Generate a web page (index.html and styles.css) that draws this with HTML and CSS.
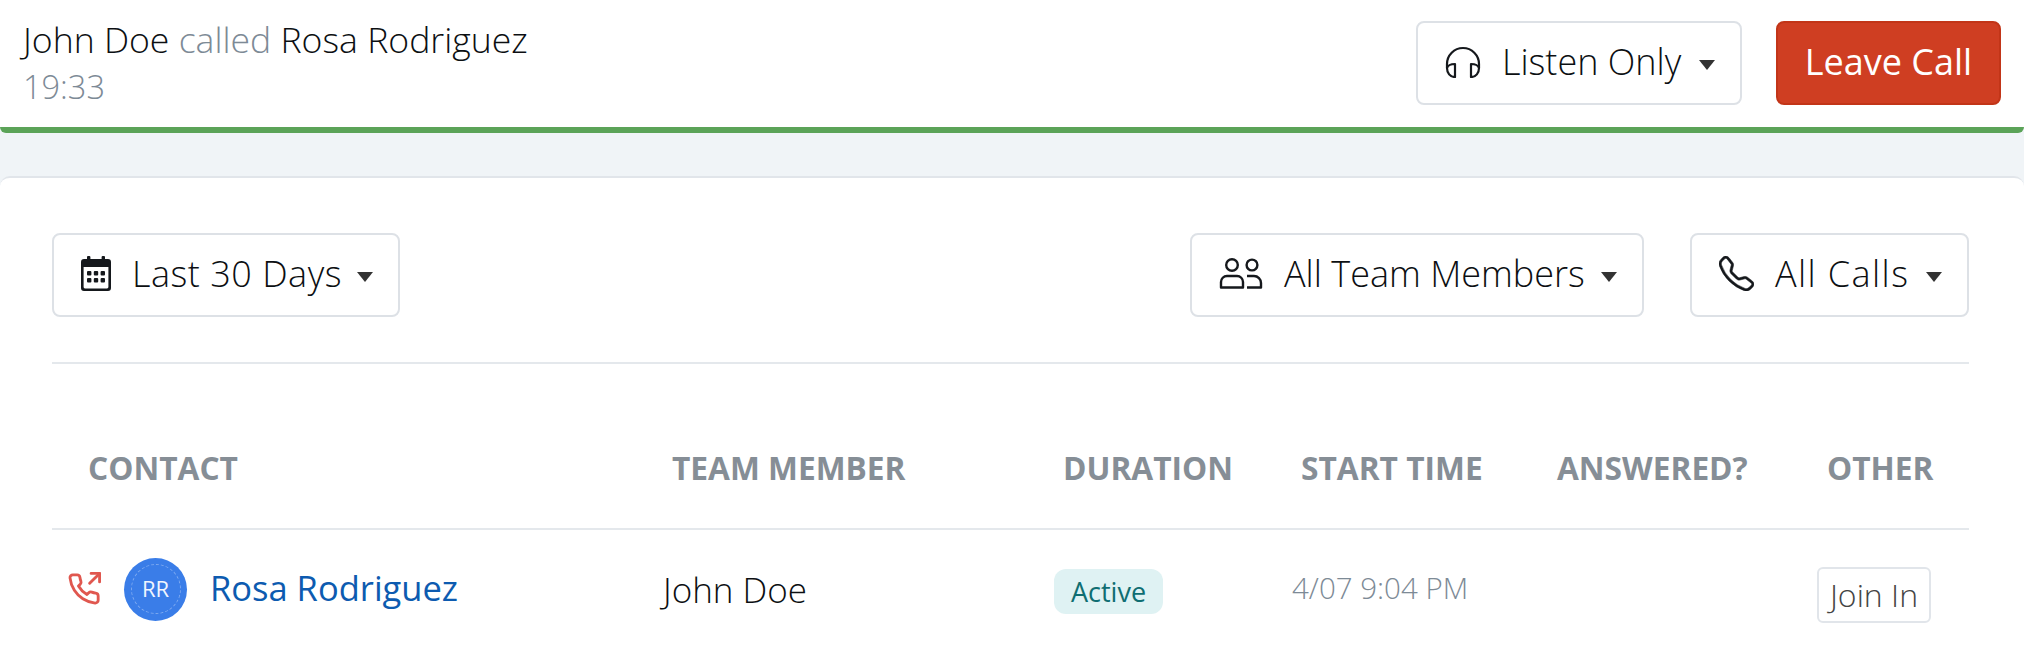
FILE: index.html
```html
<!DOCTYPE html>
<html lang="en">
<head>
	<meta charset="UTF-8">
	<title>Calls</title>
	<link rel="stylesheet" href="styles.css">
</head>
<body>
	<div class="app">
		<div class="callbar">
			<div class="callinfo">
				<div class="callnames">John Doe <span class="muted">called</span> Rosa Rodriguez</div>
				<div class="calltime">19:33</div>
			</div>
			<button class="btn listen">
				<svg class="icon" width="36" height="32" viewBox="0 0 36 32" fill="none" stroke="#15181c" stroke-width="2.2" stroke-linejoin="round">
					<path d="M2 22V18A16 16 0 0 1 34 18V22"/>
					<path d="M2 22C2 27 5 31 10 31V18C6 18 3 19 2 22Z"/>
					<path d="M34 22C34 27 31 31 26 31V18C30 18 33 19 34 22Z"/>
				</svg>
				<span class="label">Listen Only</span><span class="caret"></span>
			</button>
			<button class="btn leave"><span class="leavetext">Leave Call</span></button>
		</div>

		<div class="card">
			<div class="filters">
				<button class="btn range">
					<svg class="icon" width="30" height="35" viewBox="0 0 30 35" fill="#15181c">
						<rect x="6" y="0" width="3.4" height="7" rx="1"/>
						<rect x="20.6" y="0" width="3.4" height="7" rx="1"/>
						<path d="M3 3H27A3 3 0 0 1 30 6V32A3 3 0 0 1 27 35H3A3 3 0 0 1 0 32V6A3 3 0 0 1 3 3ZM2.6 11V31A1.4 1.4 0 0 0 4 32.4H26A1.4 1.4 0 0 0 27.4 31V11Z" fill-rule="evenodd"/>
						<rect x="6" y="15" width="4.4" height="4.4" rx="1"/>
						<rect x="12.8" y="15" width="4.4" height="4.4" rx="1"/>
						<rect x="19.6" y="15" width="4.4" height="4.4" rx="1"/>
						<rect x="6" y="22" width="4.4" height="4.4" rx="1"/>
						<rect x="12.8" y="22" width="4.4" height="4.4" rx="1"/>
						<rect x="19.6" y="22" width="4.4" height="4.4" rx="1"/>
					</svg>
					<span class="label">Last 30 Days</span><span class="caret"></span>
				</button>
				<div class="spacer"></div>
				<button class="btn members">
					<svg class="icon" width="44" height="31" viewBox="0 0 44 31" fill="none" stroke="#15181c" stroke-width="2.4" stroke-linejoin="round">
						<circle cx="13" cy="7" r="5.8"/>
						<path d="M8 18H18A6 6 0 0 1 24 24V29.5H2V24A6 6 0 0 1 8 18Z"/>
						<circle cx="33" cy="7" r="5.4"/>
						<path d="M28 18H35A7 7 0 0 1 42 25V29.5H28"/>
					</svg>
					<span class="label">All Team Members</span><span class="caret"></span>
				</button>
				<button class="btn kinds">
					<svg class="icon" width="35" height="35" viewBox="0 0 16 16" fill="#15181c" stroke="#15181c" stroke-width="0.25">
						<path d="M3.654 1.328a.678.678 0 0 0-1.015-.063L1.605 2.3c-.483.484-.661 1.169-.45 1.77a17.568 17.568 0 0 0 4.168 6.608 17.569 17.569 0 0 0 6.608 4.168c.601.211 1.286.033 1.77-.45l1.034-1.034a.678.678 0 0 0-.063-1.015l-2.307-1.794a.678.678 0 0 0-.58-.122l-2.19.547a1.745 1.745 0 0 1-1.657-.459L5.482 8.062a1.745 1.745 0 0 1-.46-1.657l.548-2.19a.678.678 0 0 0-.122-.58L3.654 1.328zM1.884.511a1.745 1.745 0 0 1 2.612.163L6.29 2.98c.329.423.445.974.315 1.494l-.547 2.19a.678.678 0 0 0 .178.643l2.457 2.457a.678.678 0 0 0 .644.178l2.189-.547a1.745 1.745 0 0 1 1.494.315l2.306 1.794c.829.645.905 1.87.163 2.611l-1.034 1.034c-.74.74-1.846 1.065-2.877.702a18.634 18.634 0 0 1-7.01-4.42 18.634 18.634 0 0 1-4.42-7.009c-.362-1.03-.037-2.137.703-2.877L1.885.511z"/>
					</svg>
					<span class="label">All Calls</span><span class="caret"></span>
				</button>
			</div>

			<table class="calls">
				<colgroup>
					<col class="c-contact">
					<col class="c-member">
					<col class="c-duration">
					<col class="c-start">
					<col class="c-answered">
					<col class="c-other">
				</colgroup>
				<thead>
					<tr>
						<th>CONTACT</th>
						<th>TEAM MEMBER</th>
						<th>DURATION</th>
						<th>START TIME</th>
						<th>ANSWERED?</th>
						<th>OTHER</th>
					</tr>
				</thead>
				<tbody>
					<tr>
						<td class="contact">
							<div class="contactrow">
								<svg class="outgoing" width="34" height="34" viewBox="0 0 24 24" fill="none" stroke="#e0574f" stroke-width="2" stroke-linecap="round" stroke-linejoin="round">
									<polyline points="23 7 23 1 17 1"/>
									<line x1="16" y1="8" x2="23" y2="1"/>
									<path d="M22 16.92v3a2 2 0 0 1-2.18 2 19.79 19.79 0 0 1-8.63-3.07 19.5 19.5 0 0 1-6-6 19.79 19.79 0 0 1-3.07-8.67A2 2 0 0 1 4.11 2h3a2 2 0 0 1 2 1.72 12.84 12.84 0 0 0 .7 2.81 2 2 0 0 1-.45 2.11L8.09 9.91a16 16 0 0 0 6 6l1.27-1.27a2 2 0 0 1 2.11-.45 12.84 12.84 0 0 0 2.81.7A2 2 0 0 1 22 16.92z"/>
								</svg>
								<div class="avatar"><span class="avatarring">RR</span></div>
								<a class="contactname" href="#">Rosa Rodriguez</a>
							</div>
						</td>
						<td>John Doe</td>
						<td><span class="badge">Active</span></td>
						<td class="started">4/07 9:04 PM</td>
						<td></td>
						<td><button class="joinbtn">Join In</button></td>
					</tr>
				</tbody>
			</table>
		</div>
	</div>
</body>
</html>
```

FILE: styles.css
```css
* {
	box-sizing: border-box;
}

body {
	margin: 0;
	background: #fff;
	font-family: "Open Sans", "Lato", sans-serif;
	font-weight: 300;
	color: #0c0f12;
	overflow: hidden;
}

.app {
	width: 2024px;
	height: 650px;
	background: #f0f4f7;
	overflow: hidden;
}

.callbar {
	display: flex;
	align-items: flex-start;
	height: 133px;
	padding: 20px 23px 0 23px;
	background: #fff;
	border-bottom: 6px solid #5ba358;
	border-radius: 0 0 6px 6px;
}

.callinfo {
	flex: 1;
}

.callnames {
	font-size: 35.6px;
	line-height: 40px;
	margin-top: -1px;
}

.muted {
	color: #7d8a96;
}

.calltime {
	margin-top: 10px;
	font-size: 32.5px;
	line-height: 36px;
	color: #7d8a96;
}

.btn {
	display: flex;
	align-items: center;
	height: 84px;
	padding: 0 25px 0 27px;
	background: #fff;
	border: 2px solid #dde1e6;
	border-radius: 8px;
	font-family: inherit;
	font-weight: 300;
	font-size: 36px;
	color: #0c0f12;
}

.icon {
	margin-top: -3px;
	margin-right: 21px;
}

.label {
	flex: 1;
	margin-top: -4px;
	text-align: left;
	white-space: nowrap;
}

.caret {
	width: 0;
	height: 0;
	margin-left: 9px;
	margin-top: 3px;
	border-top: 10px solid #333;
	border-left: 8.5px solid transparent;
	border-right: 8.5px solid transparent;
}

.listen {
	width: 326px;
	margin-top: 1px;
	margin-right: 34px;
}

.leave {
	justify-content: center;
	width: 225px;
	margin-top: 1px;
	padding: 0;
	background: #cf3e22;
	border-color: #c23518;
	font-weight: 400;
	color: #fff;
}

.leavetext {
	margin-top: -4px;
}

.range { width: 348px; }
.range .label { letter-spacing: 0.5px; }
.members { width: 454px; }
.kinds { width: 279px; }
.kinds .label { letter-spacing: 1.4px; }

.card {
	height: 500px;
	margin-top: 43px;
	padding: 55px 55px 0 52px;
	background: #fff;
	border-top: 2px solid #e1e5ea;
	border-radius: 10px 10px 0 0;
}

.filters {
	display: flex;
	gap: 46px;
	padding-bottom: 45px;
	border-bottom: 2px solid #e4e8ec;
}

.spacer {
	flex: 1;
}

.calls {
	width: 100%;
	table-layout: fixed;
	border-collapse: collapse;
}

.c-contact { width: 584px; }
.c-member { width: 391px; }
.c-duration { width: 238px; }
.c-start { width: 256px; }
.c-answered { width: 270px; }

th {
	height: 165px;
	padding: 42px 0 0 36px;
	border-bottom: 2px solid #e4e8ec;
	text-align: left;
	font-size: 31.7px;
	font-weight: 700;
	color: #868e96;
	white-space: nowrap;
}

td {
	padding: 0 0 0 27px;
	height: 119px;
	font-size: 35px;
	vertical-align: middle;
}

.contact {
	padding-left: 15px;
}

.contactrow {
	display: flex;
	align-items: center;
}

.outgoing {
	margin-right: 23px;
}

.avatar {
	display: flex;
	align-items: center;
	justify-content: center;
	width: 63px;
	height: 63px;
	margin-right: 23px;
	background: #3a7de8;
	border-radius: 50%;
}

.avatarring {
	width: 50px;
	height: 50px;
	line-height: 47px;
	border: 1px dashed rgba(255,255,255,0.35);
	border-radius: 50%;
	text-align: center;
	font-size: 22px;
	font-weight: 400;
	color: #f0f5fe;
}

.contactname {
	margin-top: -4px;
	font-size: 34.5px;
	font-weight: 400;
	color: #0d5bb0;
	text-decoration: none;
}

.badge {
	display: inline-block;
	width: 109px;
	height: 45px;
	margin-top: 2px;
	line-height: 45px;
	background: #dff2f3;
	border-radius: 12px;
	text-align: center;
	font-size: 27px;
	font-weight: 500;
	color: #0f6e72;
}

.started {
	padding-bottom: 4px;
	font-size: 29.5px;
	color: #7d8a96;
}

.joinbtn {
	width: 114px;
	height: 56px;
	margin: 12px 0 0 -1px;
	padding: 0 0 2px;
	background: #fff;
	border: 2px solid #e1e5ea;
	border-radius: 6px;
	font-family: inherit;
	font-weight: 300;
	font-size: 32px;
	color: #444;
}
```
